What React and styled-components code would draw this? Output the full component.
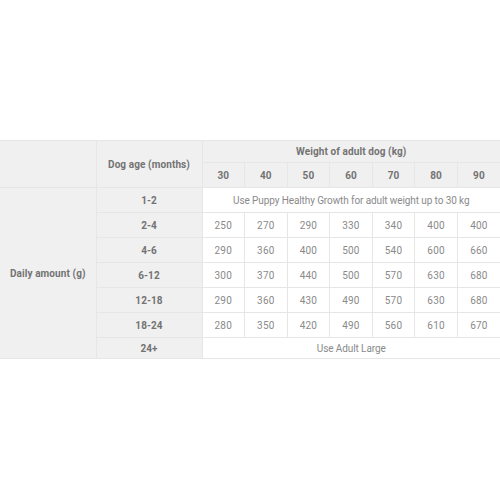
import React from "react";
import styled, { createGlobalStyle } from "styled-components";

const Global = createGlobalStyle`
  html, body { margin: 0; padding: 0; background: #fff; }
  body { font-family: Roboto, "Open Sans", sans-serif; }
`;

const Page = styled.div`
  width: 500px;
  height: 500px;
  padding-top: 140px;
  box-sizing: border-box;
`;

const Table = styled.table`
  width: 500px;
  border-collapse: collapse;
  table-layout: fixed;
  color: #7a7a7a;
  font-size: 10px;
`;

const Cell = styled.td`
  border: 1px solid #e6e6e6;
  text-align: center;
  padding: 0;
  height: ${(p) => p.$h || 24}px;
  background: ${(p) => (p.$head ? "#f0f0f0" : "#fff")};
  font-weight: ${(p) => (p.$head ? 700 : 400)};
  color: ${(p) => (p.$head ? "#737373" : "#8a8a8a")};
  font-size: 10px;
  letter-spacing: ${(p) => (p.$wide ? "-0.1px" : p.$head ? "0.1px" : "0.2px")};
  &:first-child { border-left: none; }
  &:last-child { border-right: none; }
`;

const weights = [30, 40, 50, 60, 70, 80, 90];
const rows = [
  ["2-4", [250, 270, 290, 330, 340, 400, 400]],
  ["4-6", [290, 360, 400, 500, 540, 600, 660]],
  ["6-12", [300, 370, 440, 500, 570, 630, 680]],
  ["12-18", [290, 360, 430, 490, 570, 630, 680]],
  ["18-24", [280, 350, 420, 490, 560, 610, 670]],
];

export default function App() {
  return (
    <Page>
      <Global />
      <Table>
        <colgroup>
          <col style={{ width: 96 }} />
          <col style={{ width: 106 }} />
          {weights.map((w) => (
            <col key={w} />
          ))}
        </colgroup>
        <tbody>
          <tr>
            <Cell as="th" $head rowSpan={2} $h={22} />
            <Cell as="th" $head rowSpan={2} $h={22}>Dog age (months)</Cell>
            <Cell as="th" $head colSpan={7} $h={21}>Weight of adult dog (kg)</Cell>
          </tr>
          <tr>
            {weights.map((w) => (
              <Cell as="th" $head key={w} $h={24}>{w}</Cell>
            ))}
          </tr>
          <tr>
            <Cell as="th" $head rowSpan={7}>Daily amount (g)</Cell>
            <Cell as="th" $head>1-2</Cell>
            <Cell colSpan={7} $wide>Use Puppy Healthy Growth for adult weight up to 30 kg</Cell>
          </tr>
          {rows.map(([age, vals]) => (
            <tr key={age}>
              <Cell as="th" $head>{age}</Cell>
              {vals.map((v, i) => (
                <Cell key={i}>{v}</Cell>
              ))}
            </tr>
          ))}
          <tr>
            <Cell as="th" $head $h={20}>24+</Cell>
            <Cell colSpan={7} $h={20} $wide>Use Adult Large</Cell>
          </tr>
        </tbody>
      </Table>
    </Page>
  );
}
